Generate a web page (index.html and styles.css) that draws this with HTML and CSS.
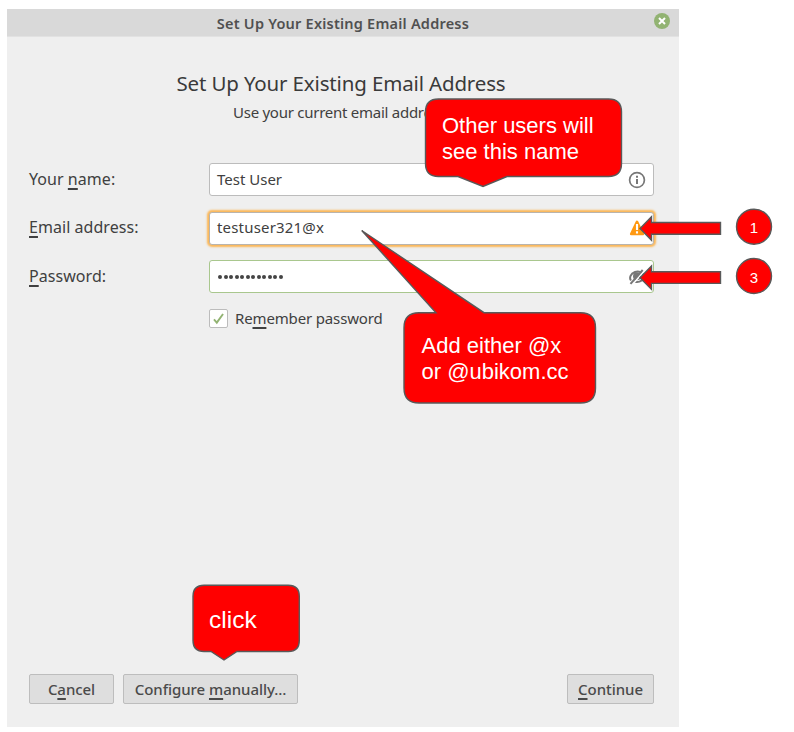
FILE: index.html
```html
<!DOCTYPE html>
<html lang="en">
<head>
<meta charset="utf-8">
<title>Set Up Your Existing Email Address</title>
<link rel="stylesheet" href="styles.css">
</head>
<body>
<main class="window">
  <header class="titlebar">
    <span class="title">Set Up Your Existing Email Address</span>
    <svg class="close" viewBox="0 0 16 16"><circle cx="8" cy="8" r="8" fill="#92b372"/><path d="M5 5l6 6M11 5l-6 6" stroke="#fff" stroke-width="2"/></svg>
  </header>
  <section class="content">
    <h1>Set Up Your Existing Email Address</h1>
    <p class="sub">Use your current email address</p>
    <form class="form">
      <label>Your <u>n</u>ame:</label>
      <div class="field"><span class="value">Test User</span>
        <svg class="icon" viewBox="0 0 18 18"><circle cx="9" cy="9" r="7.400" fill="none" stroke="#777" stroke-width="1.700"/><path d="M9 4.800v2M9 8v5" stroke="#777" stroke-width="2"/></svg>
      </div>
      <label class="lab-email"><u>E</u>mail address:</label>
      <div class="field focus"><span class="value v-email">testuser321@x</span>
        <svg class="icon" viewBox="0 0 18 18"><path d="M9 2.800L14.800 15H3.200Z" fill="#ff9912" stroke="#ff9912" stroke-width="2.600" stroke-linejoin="round"/><path d="M9 5v6M9 12.200v2.200" stroke="#fff" stroke-width="2.100"/></svg>
      </div>
      <label class="lab-pass"><u>P</u>assword:</label>
      <div class="field valid"><span class="dots"><i></i><i></i><i></i><i></i><i></i><i></i><i></i><i></i><i></i><i></i><i></i><i></i></span>
        <svg class="icon" viewBox="0 0 18 18"><path d="M3 12.500C1 10 2.500 5.500 7 4C11 2.700 15 4.500 17 9C14 14 9 15 6 13.300" fill="none" stroke="#777" stroke-width="2"/><circle cx="9" cy="8.200" r="4" fill="#777"/><path d="M4.500 16.500L16.500 2.500" stroke="#fff" stroke-width="1.800"/><path d="M2.500 15.800L14.700 2" stroke="#777" stroke-width="2"/></svg>
      </div>
      <div class="remember">
        <span class="box"><svg viewBox="0 0 18 18"><path d="M4.200 10l3 3.400L13.800 4.200" fill="none" stroke="#92b372" stroke-width="2"/></svg></span>
        <span class="lab-remember">Re<u>m</u>ember password</span>
      </div>
    </form>
    <footer class="actions">
      <button class="b-cancel">C<u>a</u>ncel</button>
      <button class="b-config">Configure <u>m</u>anually…</button>
      <button class="b-continue"><u>C</u>ontinue</button>
    </footer>
  </section>
</main>
<svg class="shapes" viewBox="0 0 794 732">
  <g fill="#f00" stroke="#595959" stroke-width="1.4">
    <path d="M438.500 99H608.500Q621.500 99 621.500 112V163.500Q621.500 176.500 608.500 176.500H507L483 186.500L458 176.500H438.500Q425.500 176.500 425.500 163.500V112Q425.500 99 438.500 99Z"/>
    <path d="M419 312.700H436L361.700 230.500L484 312.700H580.500Q595.500 312.700 595.500 327.700V388Q595.500 403 580.500 403H419Q404 403 404 388V327.700Q404 312.700 419 312.700Z"/>
    <path d="M204 585.300H288.300Q299.300 585.300 299.300 596.300V640.500Q299.300 651.500 288.300 651.500H237L224 660L211 651.500H204Q193 651.500 193 640.500V596.300Q193 585.300 204 585.300Z"/>
    <path d="M640 228.500L651.500 216.800V222.500H720.500V234.200H651.500V240.200Z"/>
    <path d="M640 277.700L651.500 266V271.700H720.500V283.400H651.500V289.400Z"/>
    <circle cx="754" cy="226.700" r="17.500"/>
    <circle cx="754" cy="276" r="17.500"/>
  </g>
</svg>
<p class="note note-name">Other users will<br>see this name</p>
<p class="note note-email">Add either @x<br>or @ubikom.cc</p>
<p class="note note-click">click</p>
<span class="step step-one">1</span>
<span class="step step-three">3</span>
</body>
</html>
```
FILE: styles.css
```css
* { box-sizing: border-box; }
body { margin: 0; width: 794px; height: 732px; padding: 9px 0 0 7px; background: #fff; position: relative; overflow: hidden; font-family: "Noto Sans", sans-serif; color: #404040; font-size: 15px; }
h1, p { margin: 0; font-weight: 400; }
.window { width: 672px; height: 718px; background: #efefef; display: flex; flex-direction: column; }
.titlebar { height: 28px; background: #d9d9d9; border-bottom: 1px solid #e2e2e2; display: grid; grid-template-columns: 1fr auto 1fr; align-items: center; padding: 0 9px; }
.title { grid-column: 2; font-size: 14.500px; font-weight: 600; letter-spacing: 0.220px; color: #505050; white-space: nowrap; }
.close { width: 16px; height: 16px; justify-self: end; margin-top: -3px; }
.content { flex: 1; display: flex; flex-direction: column; padding: 30px 25px 23px 22px; }
h1 { height: 32px; line-height: 32px; font-size: 20.500px; letter-spacing: -0.150px; text-align: center; white-space: nowrap; color: #3a3a3a; margin-right: 1px; }
.sub { height: 26px; line-height: 26px; font-size: 15px; letter-spacing: -0.260px; padding-left: 204px; white-space: nowrap; }
.form { display: grid; grid-template-columns: 180px 445px; grid-template-rows: 33px 33px 33px 20px; row-gap: 15.500px; align-items: center; margin-top: 38px; }
label { font-size: 16px; white-space: nowrap; position: relative; top: -1px; letter-spacing: 0.050px; }
u { text-decoration-thickness: 1.500px; text-underline-offset: 3px; text-decoration-skip-ink: none; }
.field { height: 33px; background: #fff; border: 1px solid #bcbcbc; border-radius: 3px; display: flex; align-items: center; justify-content: space-between; padding: 0 7px; white-space: nowrap; }
.value { padding-bottom: 2px; }
.v-email { letter-spacing: 0.180px; }
.focus { border-color: #b9b4ad; box-shadow: 0 0 2px 2px #fbb757; }
.valid { border-color: #a9c78e; }
.icon { width: 18px; height: 18px; }
.dots { display: flex; gap: 1.500px; padding-left: 1px; }
.dots i { width: 4px; height: 4px; border-radius: 50%; background: #444; }
.remember { grid-column: 2; display: flex; align-items: center; gap: 7px; white-space: nowrap; }
.lab-remember { letter-spacing: -0.150px; padding-bottom: 2px; }
.box { width: 19px; height: 19px; background: #fff; border: 1px solid #bcbcbc; border-radius: 2px; }
.box svg { display: block; width: 17px; height: 17px; }
.actions { margin-top: auto; display: flex; gap: 9px; }
button { height: 30px; padding: 0; font: 500 15px "Noto Sans", sans-serif; letter-spacing: -0.050px; color: #4a4a4a; background: #dedede; border: 1px solid #bdbdbd; border-radius: 2px; white-space: nowrap; }
.b-cancel { width: 85px; }
.b-config { width: 175px; }
.b-continue { width: 87px; margin-left: auto; }
.shapes { position: absolute; left: 0; top: 0; width: 794px; height: 732px; }
.note { position: absolute; color: #fff; font: 22px/26px "Liberation Sans", sans-serif; white-space: nowrap; }
.note-name { left: 442px; top: 113px; }
.note-email { left: 421.500px; top: 333px; }
.note-click { left: 209px; top: 607px; font-size: 24.500px; }
.step { position: absolute; left: 736px; width: 36px; text-align: center; color: #fff; font: 15px/18px "Liberation Sans", sans-serif; }
.step-one { top: 219px; }
.step-three { top: 269px; }
```
